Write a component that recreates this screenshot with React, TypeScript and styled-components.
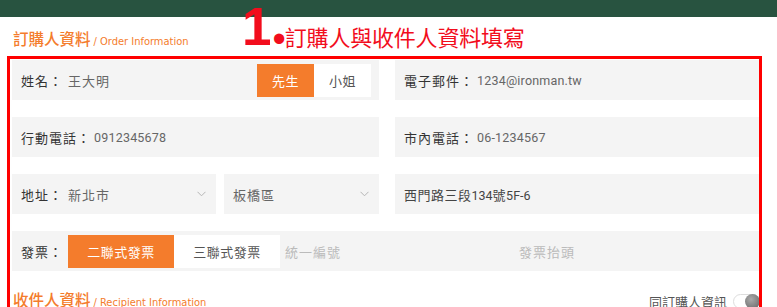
import React from "react";
import styled, { createGlobalStyle } from "styled-components";

const ORANGE = "#f47c2c";
const FIELD = "#f4f4f4";
const CJK = `"Noto Sans CJK TC", "Noto Sans", sans-serif`;
const NUM = `Roboto, "Noto Sans CJK TC", sans-serif`;

const Global = createGlobalStyle`
  html, body { margin: 0; padding: 0; background: #fff; }
  body { font-family: ${CJK}; overflow: hidden; }
  * { box-sizing: border-box; }
`;

const Screen = styled.div`
  position: relative;
  width: 777px;
  height: 307px;
  overflow: hidden;
`;

const TopBar = styled.div`
  height: 17px;
  background: #285340;
`;

const Content = styled.div`
  padding: 0 15px 0 12px;
`;

const SectionHead = styled.div<{ $h: number }>`
  height: ${(p) => p.$h}px;
  display: flex;
  align-items: center;
  justify-content: space-between;
`;

const Title = styled.h2`
  margin: 0;
  display: flex;
  align-items: baseline;
  color: ${ORANGE};
  font-family: ${CJK};
  font-size: 15.5px;
  font-weight: 500;
  line-height: 1;
  padding-left: 1px;
`;

const SubTitle = styled.span`
  font-family: "Liberation Sans Narrow", "DejaVu Sans Condensed", sans-serif;
  font-size: 11px;
  font-weight: 400;
  margin-left: 3px;
`;

const Grid = styled.div`
  display: grid;
  grid-template-columns: 367px 367px;
  column-gap: 16px;
  row-gap: 17px;
  grid-auto-rows: 40px;
`;

const Field = styled.div<{ $span?: boolean }>`
  display: flex;
  align-items: center;
  background: ${FIELD};
  padding: 0 8px 0 9px;
  grid-column: ${(p) => (p.$span ? "1 / span 2" : "auto")};
  min-width: 0;
`;

const Label = styled.span<{ $w?: number }>`
  font-family: ${CJK};
  font-size: 13px;
  color: #333;
  letter-spacing: 1px;
  white-space: nowrap;
  width: ${(p) => (p.$w ? `${p.$w}px` : "auto")};
  flex: none;
`;

const Value = styled.span<{ $cjk?: boolean }>`
  font-family: ${(p) => (p.$cjk ? CJK : NUM)};
  font-size: ${(p) => (p.$cjk ? "13px" : "12.5px")};
  color: #666;
  letter-spacing: ${(p) => (p.$cjk ? "1px" : "0.2px")};
  white-space: nowrap;
  flex: 1;
`;

const AddressValue = styled.span`
  font-family: ${NUM};
  font-size: 12.5px;
  color: #444;
  white-space: nowrap;
  & > b {
    font-family: ${CJK};
    font-weight: 400;
    font-size: 13px;
    letter-spacing: 0.5px;
  }
`;

const Segmented = styled.div`
  display: flex;
  height: 33px;
  flex: none;
`;

const SegButton = styled.button<{ $active?: boolean; $w: number }>`
  width: ${(p) => p.$w}px;
  height: 100%;
  border: 0;
  padding: 0;
  margin: 0;
  background: ${(p) => (p.$active ? ORANGE : "#fff")};
  color: ${(p) => (p.$active ? "#fff" : "#555")};
  font-family: ${CJK};
  font-size: 13px;
  letter-spacing: 0.5px;
  cursor: pointer;
`;

const SelectPair = styled.div`
  display: flex;
  gap: 8px;
  min-width: 0;
`;

const Select = styled.div<{ $w?: number }>`
  display: flex;
  align-items: center;
  background: ${FIELD};
  padding: 0 10px 0 9px;
  width: ${(p) => (p.$w ? `${p.$w}px` : "auto")};
  flex: ${(p) => (p.$w ? "none" : "1")};
  color: #aaa;
`;

const Chevron = () => (
  <svg width="9" height="6" viewBox="0 0 9 6" fill="none" stroke="#b5b5b5" strokeWidth="1">
    <path d="M0.5 0.8 L4.5 4.8 L8.5 0.8" />
  </svg>
);

const Placeholder = styled.span<{ $w: number; $center?: boolean }>`
  width: ${(p) => p.$w}px;
  flex: none;
  text-align: ${(p) => (p.$center ? "center" : "left")};
  color: #bbb;
  font-family: ${CJK};
  font-size: 13px;
  letter-spacing: 1px;
  padding-left: ${(p) => (p.$center ? 0 : 5)}px;
`;

const InvoiceField = styled(Field)`
  padding-left: 9px;
`;

const SameAs = styled.label`
  display: flex;
  align-items: center;
  gap: 6px;
  font-family: ${CJK};
  font-size: 13px;
  color: #555;
  margin-right: 2px;
  margin-top: 3px;
`;

const Track = styled.span`
  position: relative;
  width: 27px;
  height: 15px;
  border-radius: 8px;
  border: 1px solid #ddd;
  background: #fff;
  display: inline-block;
`;

const Knob = styled.span`
  position: absolute;
  right: -1px;
  top: -1px;
  width: 15px;
  height: 15px;
  border-radius: 50%;
  background: radial-gradient(circle at 40% 35%, #aaa, #777 70%);
`;

/* annotation overlay */
const RedBox = styled.div`
  position: absolute;
  left: 7px;
  top: 56px;
  width: 755px;
  height: 300px;
  border: 3px solid #ff0000;
  pointer-events: none;
`;

const Note = styled.div`
  position: absolute;
  left: 242px;
  top: -2px;
  height: 58px;
  display: flex;
  align-items: baseline;
  color: #f20d1d;
  pointer-events: none;
`;

const NoteNum = styled.span`
  font-family: "Liberation Sans", Arial, sans-serif;
  font-weight: 700;
  font-size: 53px;
  line-height: 58px;
`;

const NoteDot = styled.span`
  position: relative;
  top: 7px;
  font-family: "Liberation Sans", Arial, sans-serif;
  font-size: 38px;
  line-height: 1;
  margin: 0 -1px 0 1px;
`;

const NoteText = styled.span`
  font-family: ${CJK};
  font-size: 22px;
  letter-spacing: -0.2px;
  position: relative;
  top: 1px;
`;

export default function App() {
  return (
    <Screen>
      <Global />
      <TopBar />
      <Content>
        <SectionHead $h={43}>
          <Title>
            訂購人資料<SubTitle>/ Order Information</SubTitle>
          </Title>
        </SectionHead>
        <Grid>
          <Field>
            <Label $w={47}>姓名：</Label>
            <Value $cjk>王大明</Value>
            <Segmented>
              <SegButton $active $w={57}>先生</SegButton>
              <SegButton $w={57}>小姐</SegButton>
            </Segmented>
          </Field>
          <Field>
            <Label $w={73}>電子郵件：</Label>
            <Value>1234@ironman.tw</Value>
          </Field>
          <Field>
            <Label $w={73}>行動電話：</Label>
            <Value>0912345678</Value>
          </Field>
          <Field>
            <Label $w={73}>市內電話：</Label>
            <Value>06-1234567</Value>
          </Field>
          <SelectPair>
            <Select $w={204}>
              <Label $w={47}>地址：</Label>
              <Value $cjk>新北市</Value>
              <Chevron />
            </Select>
            <Select>
              <Value $cjk>板橋區</Value>
              <Chevron />
            </Select>
          </SelectPair>
          <Field>
            <AddressValue>
              <b>西門路三段</b>134<b>號</b>5F-6
            </AddressValue>
          </Field>
          <InvoiceField $span>
            <Label $w={47}>發票：</Label>
            <Segmented>
              <SegButton $active $w={106}>二聯式發票</SegButton>
              <SegButton $w={106}>三聯式發票</SegButton>
            </Segmented>
            <Placeholder $w={115}>統一編號</Placeholder>
            <Placeholder $w={304} $center>發票抬頭</Placeholder>
          </InvoiceField>
        </Grid>
        <SectionHead $h={57}>
          <Title>
            收件人資料<SubTitle>/ Recipient Information</SubTitle>
          </Title>
          <SameAs>
            同訂購人資訊
            <Track>
              <Knob />
            </Track>
          </SameAs>
        </SectionHead>
      </Content>
      <RedBox />
      <Note>
        <NoteNum>1</NoteNum>
        <NoteDot>•</NoteDot>
        <NoteText>訂購人與收件人資料填寫</NoteText>
      </Note>
    </Screen>
  );
}
